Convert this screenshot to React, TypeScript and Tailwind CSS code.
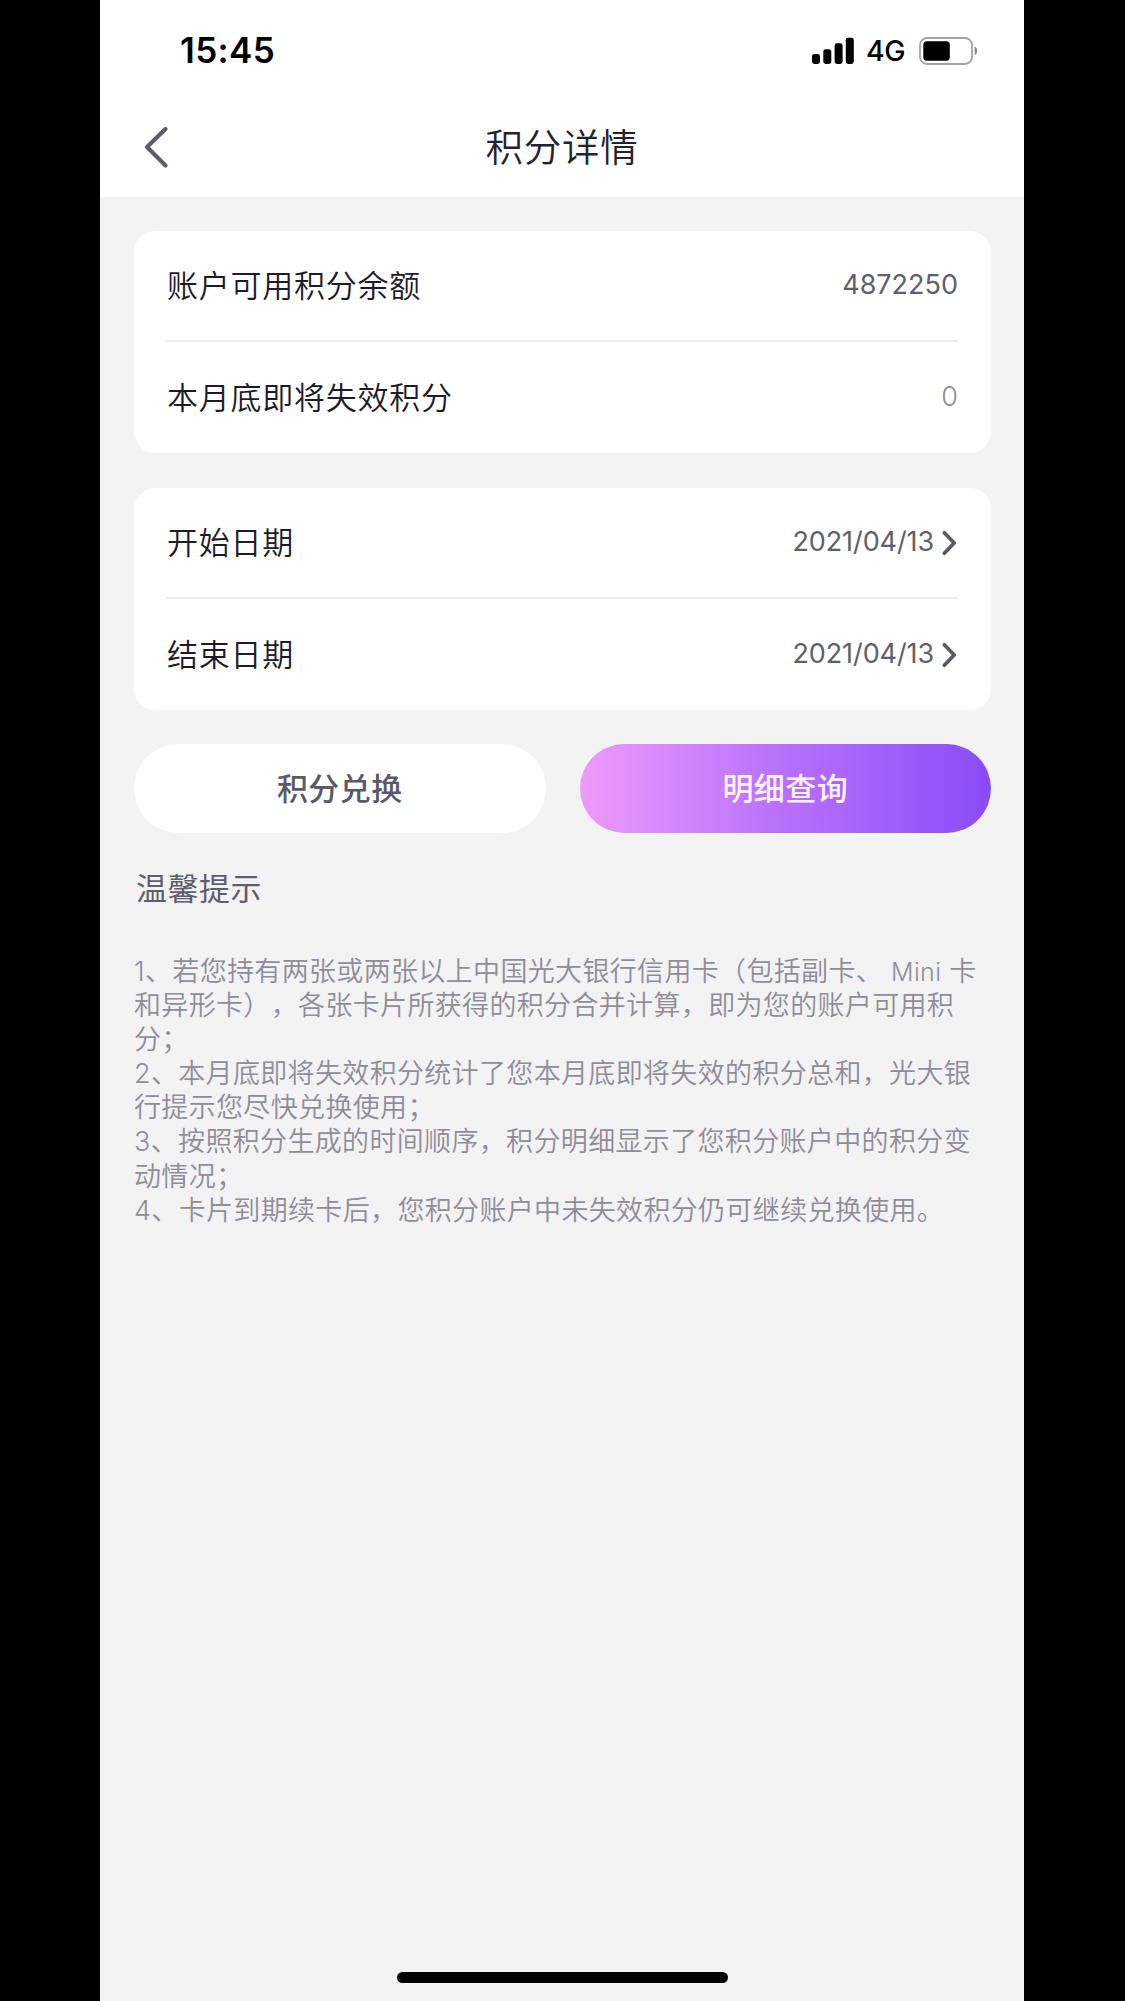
import React from "react";

const notes: React.ReactNode[] = [
  <>1、若您持有两张或两张以上中国光大银行信用卡（包括副卡、 <span className="text-[25px]">Mini</span> 卡</>,
  "和异形卡），各张卡片所获得的积分合并计算，即为您的账户可用积",
  "分；",
  "2、本月底即将失效积分统计了您本月底即将失效的积分总和，光大银",
  "行提示您尽快兑换使用；",
  "3、按照积分生成的时间顺序，积分明细显示了您积分账户中的积分变",
  "动情况；",
  "4、卡片到期续卡后，您积分账户中未失效积分仍可继续兑换使用。",
];

function StatusBar() {
  return (
    <div className="flex h-[100px] items-center justify-between pl-[80px] pr-[46px] pt-px text-black">
      <div className="text-[35px] font-semibold leading-none tracking-[0.35px]">15:45</div>
      <div className="flex items-center">
        <svg width="42" height="28" viewBox="0 0 42 28" fill="black">
          <rect x="0" y="17" width="8" height="10" rx="2.4" />
          <rect x="11.3" y="12.3" width="8" height="14.7" rx="2.4" />
          <rect x="22.6" y="6.3" width="8" height="20.7" rx="2.4" />
          <rect x="33.8" y="0.8" width="8" height="26.2" rx="2.4" />
        </svg>
        <div className="ml-[12px] w-[53px] pt-[2px] text-[28.5px] font-medium leading-none tracking-[-0.5px]">4G</div>
        <svg width="59" height="28" viewBox="0 0 59 28">
          <rect x="1" y="1" width="52" height="26" rx="7" fill="none" stroke="#a3a3a3" strokeWidth="1.8" />
          <rect x="4.3" y="4.3" width="26.5" height="19.4" rx="3.5" fill="black" />
          <path d="M55.6 9.6c3.4 1.4 3.4 7.4 0 8.8z" fill="#8c8c8c" />
        </svg>
      </div>
    </div>
  );
}

function Arrow() {
  return (
    <svg className="ml-[8px] mr-[1px]" width="15" height="26" viewBox="0 0 15 26" fill="none">
      <path d="M2.3 2.7 12.2 13 2.3 23.3" stroke="#5a5866" strokeWidth="3.6" strokeLinecap="round" strokeLinejoin="round" />
    </svg>
  );
}

function Row({ label, value, muted, arrow }: { label: string; value: string; muted?: boolean; arrow?: boolean }) {
  return (
    <div className="flex flex-1 items-center justify-between pb-px text-[27px]">
      <span className="pb-px text-[31px] font-[350] leading-none tracking-[0.75px] text-[#1d1b29]">{label}</span>
      <span className={muted ? "flex items-center font-[350] text-[#8e8d95]" : "flex items-center font-[370] text-[#605f6b]"}>
        <span className={arrow ? "tracking-[-0.1px]" : "tracking-[0px]"}>{value}</span>
        {arrow && <Arrow />}
      </span>
    </div>
  );
}

function Card({ children }: { children: React.ReactNode }) {
  return <section className="flex h-[222px] flex-col rounded-[21px] bg-white px-[33px]">{children}</section>;
}

const Divider = () => <div className="-mt-px mb-px h-[2px] bg-[#ebebec]" />;

export default function App() {
  return (
    <div className="flex h-[2001px] w-[1125px] justify-center overflow-hidden bg-black pr-[1px] font-['Inter','Noto_Sans_CJK_SC',sans-serif] [text-spacing-trim:space-all]">
      <main className="flex w-[924px] flex-col bg-[#f3f3f4]">
        <header className="h-[197px] bg-white">
          <StatusBar />
          <div className="grid h-[94px] grid-cols-[100px_1fr_100px] items-center">
            <svg className="ml-[42px]" width="28" height="44" viewBox="0 0 28 44" fill="none">
              <path d="M23.5 4 5 22 23.5 40.5" stroke="#5f5d69" strokeWidth="4.2" strokeLinecap="round" strokeLinejoin="round" />
            </svg>
            <h1 className="pt-px text-center text-[37.5px] font-[350] leading-none tracking-[0.8px] text-[#24222f]">积分详情</h1>
          </div>
        </header>

        <div className="flex flex-1 flex-col pl-[34px] pr-[33px] pt-[34px]">
          <Card>
            <Row label="账户可用积分余额" value="4872250" />
            <Divider />
            <Row label="本月底即将失效积分" value="0" muted />
          </Card>
          <div className="h-[35px]" />
          <Card>
            <Row label="开始日期" value="2021/04/13" arrow />
            <Divider />
            <Row label="结束日期" value="2021/04/13" arrow />
          </Card>

          <div className="mt-[34px] grid h-[89px] grid-cols-2 gap-[34px] text-[31px] font-medium tracking-[0.4px]">
            <button className="rounded-full bg-white pt-[2px] text-[#5b5967]">积分兑换</button>
            <button className="rounded-full bg-linear-to-r from-[#ed9bfb] via-[#b86ffb] to-[#8a4bf8] pt-[2px] text-[#fdf3ff]">明细查询</button>
          </div>

          <h2 className="ml-[2px] mt-[39px] text-[31px] leading-[34px] tracking-[0.5px] text-[#5f5e6b]">温馨提示</h2>
          <div className="mt-[49px] text-[27px] font-[350] leading-[34.1px] tracking-[0.34px] text-[#8f8e98]">
            {notes.map((line, i) => (
              <p key={i} className="h-[34.1px] whitespace-pre">{line}</p>
            ))}
          </div>
        </div>

        <div className="mb-[18px] h-[11px] w-[331px] self-center rounded-full bg-black" />
      </main>
    </div>
  );
}
